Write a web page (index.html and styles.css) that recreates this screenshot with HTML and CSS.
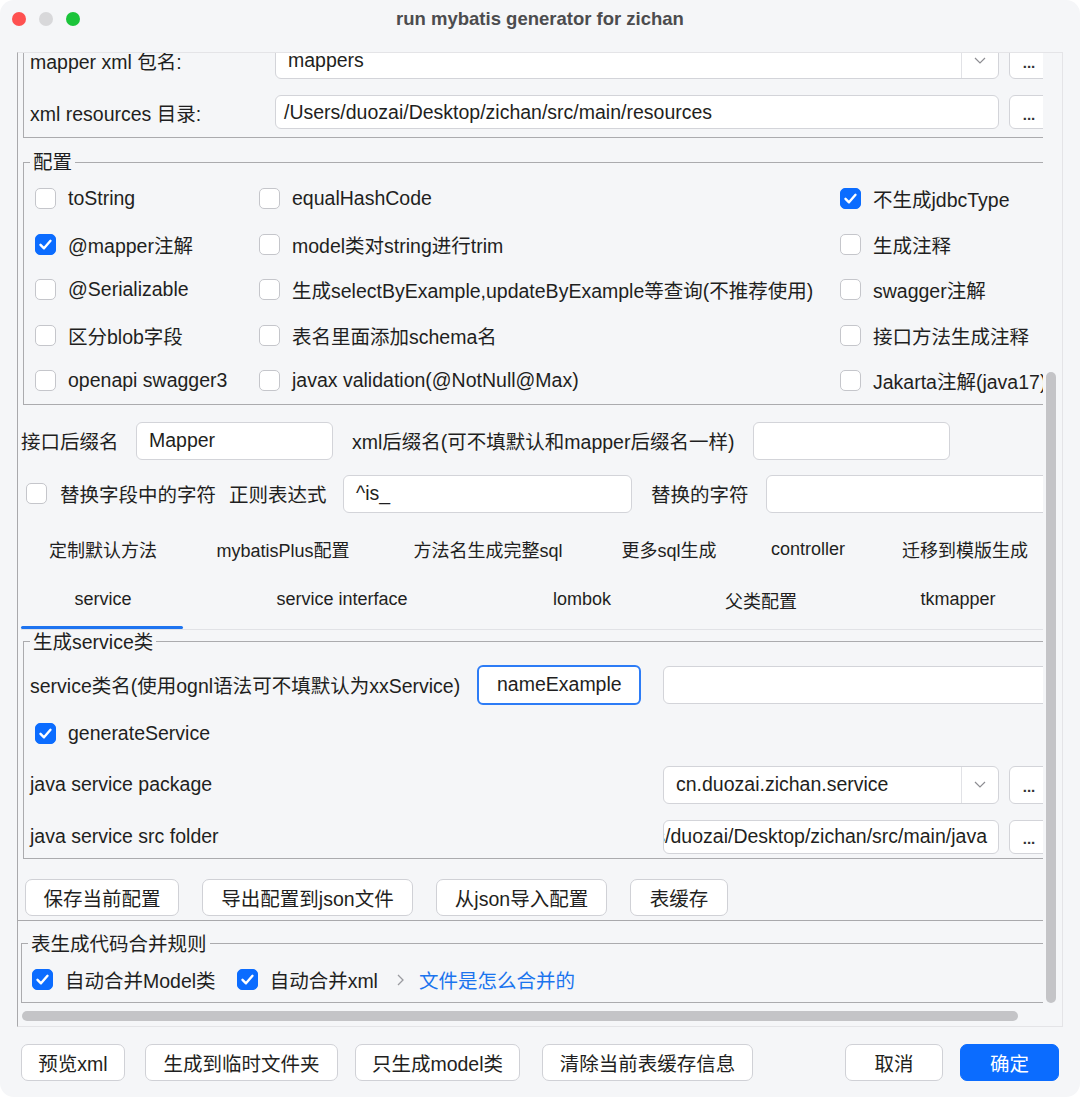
FILE: index.html
```html
<!DOCTYPE html>
<html lang="zh-CN">
<head>
<meta charset="utf-8">
<title>run mybatis generator for zichan</title>
<link rel="stylesheet" href="styles.css">
</head>
<body>
<div class="window">
  <div class="titlebar">
    <div class="lights"><span class="light red"></span><span class="light gray"></span><span class="light green"></span></div>
    <div class="title">run mybatis generator for zichan</div>
    <div></div>
  </div>

  <div class="scrollpane">
    <div class="scroll-main">
      <div class="viewport">
        <div class="content">

          <div class="group-paths">
            <div class="prow">
              <span class="prow-label">mapper xml 包名:</span>
              <div class="combo combo-wide">
                <span class="combo-text">mappers</span>
                <span class="combo-arrow"><svg width="12" height="7" viewBox="0 0 12 7"><polyline points="1,1 6,6 11,1" fill="none" stroke="#8d8d92" stroke-width="1.2"/></svg></span>
              </div>
              <button class="dots h38">...</button>
            </div>
            <div class="prow">
              <span class="prow-label">xml resources 目录:</span>
              <div class="field field-wide h34 pad8">/Users/duozai/Desktop/zichan/src/main/resources</div>
              <button class="dots h34">...</button>
            </div>
          </div>

          <fieldset class="group group-config">
            <legend>配置</legend>
            <div class="check-grid">
              <label class="citem"><span class="cb"></span>toString</label>
              <label class="citem"><span class="cb"></span>equalHashCode</label>
              <label class="citem"><span class="cb checked"><svg width="21" height="21" viewBox="0 0 21 21"><polyline points="5.5,10.8 9,14.3 15.5,6.8" fill="none" stroke="#fff" stroke-width="2.4" stroke-linecap="round" stroke-linejoin="round"/></svg></span>不生成jdbcType</label>

              <label class="citem"><span class="cb checked"><svg width="21" height="21" viewBox="0 0 21 21"><polyline points="5.5,10.8 9,14.3 15.5,6.8" fill="none" stroke="#fff" stroke-width="2.4" stroke-linecap="round" stroke-linejoin="round"/></svg></span>@mapper注解</label>
              <label class="citem"><span class="cb"></span>model类对string进行trim</label>
              <label class="citem"><span class="cb"></span>生成注释</label>

              <label class="citem"><span class="cb"></span>@Serializable</label>
              <label class="citem"><span class="cb"></span>生成selectByExample,updateByExample等查询(不推荐使用)</label>
              <label class="citem"><span class="cb"></span>swagger注解</label>

              <label class="citem"><span class="cb"></span>区分blob字段</label>
              <label class="citem"><span class="cb"></span>表名里面添加schema名</label>
              <label class="citem"><span class="cb"></span>接口方法生成注释</label>

              <label class="citem"><span class="cb"></span>openapi swagger3</label>
              <label class="citem"><span class="cb"></span>javax validation(@NotNull@Max)</label>
              <label class="citem"><span class="cb"></span>Jakarta注解(java17)</label>
            </div>
          </fieldset>

          <div class="frow frow-first">
            <span class="lbl w115">接口后缀名</span>
            <div class="field w197 h38 pad12">Mapper</div>
            <span class="lbl w401 ml19">xml后缀名(可不填默认和mapper后缀名一样)</span>
            <div class="field w197 h38"></div>
          </div>
          <div class="frow frow-second">
            <span class="cb ml5"></span>
            <span class="lbl w169 ml13">替换字段中的字符</span>
            <span class="lbl w114">正则表达式</span>
            <div class="field w289 h38 pad12">^is_</div>
            <span class="lbl w134 pl19">替换的字符</span>
            <div class="field w300 h38"></div>
          </div>

          <div class="tabpane">
            <div class="tabheader">
              <div class="tabrow tabrow1">
                <div class="tab"><span class="tab-text">定制默认方法</span></div>
                <div class="tab"><span class="tab-text">mybatisPlus配置</span></div>
                <div class="tab"><span class="tab-text">方法名生成完整sql</span></div>
                <div class="tab"><span class="tab-text">更多sql生成</span></div>
                <div class="tab"><span class="tab-text">controller</span></div>
                <div class="tab"><span class="tab-text">迁移到模版生成</span></div>
              </div>
              <div class="tabrow tabrow2">
                <div class="tab active"><span class="tab-text">service</span><span class="tab-bar"></span></div>
                <div class="tab"><span class="tab-text">service interface</span><span class="tab-bar"></span></div>
                <div class="tab"><span class="tab-text">lombok</span><span class="tab-bar"></span></div>
                <div class="tab"><span class="tab-text">父类配置</span><span class="tab-bar"></span></div>
                <div class="tab"><span class="tab-text">tkmapper</span><span class="tab-bar"></span></div>
              </div>
            </div>

            <fieldset class="group group-service">
              <legend>生成service类</legend>
              <div class="srow r1">
                <span class="lbl w447">service类名(使用ognl语法可不填默认为xxService)</span>
                <div class="field focused w164 h40">nameExample</div>
                <div class="field w400 h38 ml22"></div>
              </div>
              <div class="srow r2">
                <label class="citem ml5"><span class="cb checked"><svg width="21" height="21" viewBox="0 0 21 21"><polyline points="5.5,10.8 9,14.3 15.5,6.8" fill="none" stroke="#fff" stroke-width="2.4" stroke-linecap="round" stroke-linejoin="round"/></svg></span>generateService</label>
              </div>
              <div class="srow r3">
                <span class="lbl w633">java service package</span>
                <div class="combo combo-narrow">
                  <span class="combo-text">cn.duozai.zichan.service</span>
                  <span class="combo-arrow"><svg width="12" height="7" viewBox="0 0 12 7"><polyline points="1,1 6,6 11,1" fill="none" stroke="#8d8d92" stroke-width="1.2"/></svg></span>
                </div>
                <button class="dots h38">...</button>
              </div>
              <div class="srow r4">
                <span class="lbl w633">java service src folder</span>
                <div class="field field-end w336 h34"><span>/Users/duozai/Desktop/zichan/src/main/java</span></div>
                <button class="dots h34">...</button>
              </div>
            </fieldset>

            <div class="cfg-buttons">
              <button class="btn w154">保存当前配置</button>
              <button class="btn w211">导出配置到json文件</button>
              <button class="btn w171">从json导入配置</button>
              <button class="btn w98">表缓存</button>
            </div>
          </div>

          <fieldset class="group group-merge">
            <legend>表生成代码合并规则</legend>
            <div class="mrow">
              <label class="citem ml4"><span class="cb checked"><svg width="21" height="21" viewBox="0 0 21 21"><polyline points="5.5,10.8 9,14.3 15.5,6.8" fill="none" stroke="#fff" stroke-width="2.4" stroke-linecap="round" stroke-linejoin="round"/></svg></span>自动合并Model类</label>
              <label class="citem ml21"><span class="cb checked"><svg width="21" height="21" viewBox="0 0 21 21"><polyline points="5.5,10.8 9,14.3 15.5,6.8" fill="none" stroke="#fff" stroke-width="2.4" stroke-linecap="round" stroke-linejoin="round"/></svg></span>自动合并xml</label>
              <span class="chev"><svg width="7" height="12" viewBox="0 0 7 12"><polyline points="1,1 6,6 1,11" fill="none" stroke="#9b9ba0" stroke-width="1.3"/></svg></span>
              <span class="link">文件是怎么合并的</span>
            </div>
          </fieldset>

        </div>
      </div>
      <div class="vbar"><div class="vthumb"></div></div>
    </div>
    <div class="hbar"><div class="hthumb"></div></div>
  </div>

  <div class="actions">
    <button class="btn w104">预览xml</button>
    <button class="btn w193 ml20">生成到临时文件夹</button>
    <button class="btn w165 ml17">只生成model类</button>
    <button class="btn w211 ml22">清除当前表缓存信息</button>
    <button class="btn w98 push">取消</button>
    <button class="btn primary w99 ml17">确定</button>
  </div>
</div>
</body>
</html>
```

FILE: styles.css
```css
* { box-sizing: border-box; }

html, body {
  margin: 0;
  padding: 0;
  background: #ffffff;
}

body {
  font-family: "Liberation Sans", "Noto Sans CJK SC", sans-serif;
  font-size: 19.5px;
  color: #1f1f21;
}

.window {
  width: 1080px;
  height: 1097px;
  background: #f5f6f8;
  border-radius: 14px;
  overflow: hidden;
}

/* ---------- title bar ---------- */
.titlebar {
  height: 38px;
  display: grid;
  grid-template-columns: 1fr auto 1fr;
  align-items: center;
}
.lights {
  display: flex;
  gap: 13px;
  padding-left: 12px;
}
.light {
  width: 14px;
  height: 14px;
  border-radius: 50%;
}
.red { background: #fe5150; }
.gray { background: #d8d8da; }
.green { background: #1bc43a; }
.title {
  font-weight: bold;
  font-size: 18.5px;
  color: #4c4c4e;
}

/* ---------- scroll pane ---------- */
.scrollpane {
  margin: 14px 0 0 17px;
  width: 1046px;
  height: 975px;
  border: 1px solid #e4e4e7;
  border-left-color: #a9a9ac;
  display: flex;
  flex-direction: column;
}
.scroll-main {
  display: flex;
  height: 952px;
}
.viewport {
  width: 1025px;
  overflow: hidden;
}
.vbar {
  width: 19px;
  padding: 319px 0 0 3px;
}
.vthumb {
  width: 10px;
  height: 631px;
  border-radius: 5px;
  background: #c4c4c7;
}
.hbar {
  height: 21px;
  padding: 6px 0 0 4px;
}
.hthumb {
  width: 996px;
  height: 10px;
  border-radius: 5px;
  background: #c4c4c7;
}

.content {
  width: 1060px;
  margin-top: -27px;
}

/* ---------- common controls ---------- */
.field {
  background: #ffffff;
  border: 1px solid #d3d4d9;
  border-radius: 6px;
  display: flex;
  align-items: center;
  white-space: nowrap;
  overflow: hidden;
  padding: 0 12px;
  flex: none;
}
.pad8 { padding-left: 8px; }
.pad12 { padding-left: 12px; }
.field.focused {
  border: 2px solid #2d7cf6;
  padding-left: 18px;
}
.field-end {
  justify-content: flex-end;
  padding: 0 11px 0 0;
}
.field-end span { flex: none; }

.combo {
  background: #ffffff;
  border: 1px solid #d3d4d9;
  border-radius: 6px;
  display: flex;
  align-items: stretch;
  height: 38px;
  flex: none;
}
.combo-wide { width: 724px; }
.combo-narrow { width: 336px; }
.combo-text {
  flex: 1;
  display: flex;
  align-items: center;
  padding-left: 12px;
  white-space: nowrap;
}
.combo-arrow {
  width: 37px;
  border-left: 1px solid #e1e2e6;
  display: flex;
  align-items: center;
  justify-content: center;
}

.dots {
  width: 40px;
  margin-left: 10px;
  background: #ffffff;
  border: 1px solid #d3d4d9;
  border-radius: 6px;
  font-family: "Liberation Sans", sans-serif;
  font-size: 15px;
  font-weight: bold;
  color: #333;
  padding: 4px 0 0 0;
  flex: none;
}

.btn {
  background: #ffffff;
  border: 1px solid #d0d1d6;
  border-radius: 7px;
  height: 37px;
  font-family: "Liberation Sans", "Noto Sans CJK SC", sans-serif;
  font-size: 19.5px;
  color: #1f1f21;
  padding: 0;
  flex: none;
  white-space: nowrap;
}
.btn.primary {
  background: #0b6cff;
  border-color: #0b6cff;
  color: #ffffff;
}

.cb {
  width: 21px;
  height: 21px;
  border: 1px solid #c5c6cb;
  border-radius: 5px;
  background: #ffffff;
  flex: none;
  display: block;
}
.cb.checked {
  background: #0b6cff;
  border-color: #0b6cff;
}
.cb svg { display: block; margin: -1px; }

.citem {
  display: flex;
  align-items: center;
  gap: 12px;
  white-space: nowrap;
}

.lbl {
  white-space: nowrap;
  flex: none;
}

/* sizes */
.h34 { height: 34px; }
.h38 { height: 38px; }
.h40 { height: 40px; }
.w98 { width: 98px; }
.w99 { width: 99px; }
.w104 { width: 104px; }
.w114 { width: 114px; }
.w115 { width: 115px; }
.w134 { width: 134px; }
.w154 { width: 154px; }
.w164 { width: 164px; }
.w165 { width: 165px; }
.w169 { width: 169px; }
.w171 { width: 171px; }
.w193 { width: 193px; }
.w197 { width: 197px; }
.w211 { width: 211px; }
.w289 { width: 289px; }
.w300 { width: 300px; }
.w336 { width: 336px; }
.w400 { width: 400px; }
.w401 { width: 401px; }
.w447 { width: 447px; }
.w633 { width: 633px; }
.ml4 { margin-left: 4px; }
.ml5 { margin-left: 5px; }
.ml13 { margin-left: 13px; }
.ml17 { margin-left: 17px; }
.ml19 { margin-left: 19px; }
.ml20 { margin-left: 20px; }
.ml21 { margin-left: 21px; }
.ml22 { margin-left: 22px; }
.pl19 { padding-left: 19px; }

/* ---------- groups ---------- */
.group-paths {
  margin-left: 5px;
  border: 1px solid #ababae;
  padding: 8px 0 0 6px;
  display: flex;
  flex-direction: column;
  gap: 2px;
}
.prow {
  height: 50px;
  display: flex;
  align-items: center;
}
.prow-label {
  width: 245px;
  flex: none;
  white-space: nowrap;
}
.field-wide { width: 724px; }

fieldset.group {
  margin: 0;
  border: 1px solid #ababae;
  padding: 2px 0 0 6px;
  min-width: 0;
}
fieldset.group legend {
  padding: 0 3px;
  line-height: 24px;
  font-size: 19.5px;
}

.group-config {
  margin: 12px 0 0 5px !important;
}
.check-grid {
  margin-left: 5px;
  display: grid;
  grid-template-columns: 224px 581px auto;
  grid-auto-rows: 45.5px;
  align-items: center;
}

/* form rows */
.frow {
  display: flex;
  align-items: center;
  height: 38px;
  margin-left: 3px;
}
.frow-first { margin-top: 17px; }
.frow-second { margin-top: 15px; }

/* ---------- tabs ---------- */
.tabpane {
  margin-top: 12px;
  border-bottom: 1px solid #a9a9ac;
  padding-bottom: 4px;
}
.tabheader {
  margin-left: 3px;
  border-bottom: 1px solid #e1e2e6;
}
.tabrow {
  display: grid;
}
.tabrow1 {
  grid-template-columns: 164px 196px 214px 148px 130px 184px;
  height: 49px;
}
.tabrow2 {
  grid-template-columns: 164px 314px 166px 192px 202px;
  height: 55px;
}
.tab {
  display: flex;
  flex-direction: column;
  font-size: 18px;
  white-space: nowrap;
}
.tab-text {
  flex: 1;
  display: flex;
  align-items: center;
  justify-content: center;
}
.tab-bar {
  height: 3px;
  margin-right: 2px;
  border-radius: 2px;
}
.tab.active .tab-bar { background: #1e74f0; }

.group-service {
  margin: 0 0 0 5px !important;
}
.srow {
  display: flex;
  align-items: center;
}
.r1 { height: 58px; }
.r2 { height: 40px; }
.r3 { height: 62px; }
.r4 { height: 42px; }

.cfg-buttons {
  margin: 20px 0 0 7px;
  display: flex;
  gap: 23px;
}

/* ---------- merge group ---------- */
.group-merge {
  margin: 11px 0 0 3px !important;
}
.mrow {
  height: 44px;
  display: flex;
  align-items: center;
}
.chev {
  margin-left: 19px;
  display: flex;
  align-items: center;
}
.link {
  margin-left: 15px;
  color: #1b74ee;
  white-space: nowrap;
}

/* ---------- bottom actions ---------- */
.actions {
  display: flex;
  margin-top: 17px;
  padding: 0 21px;
}
.push { margin-left: auto; }
```
